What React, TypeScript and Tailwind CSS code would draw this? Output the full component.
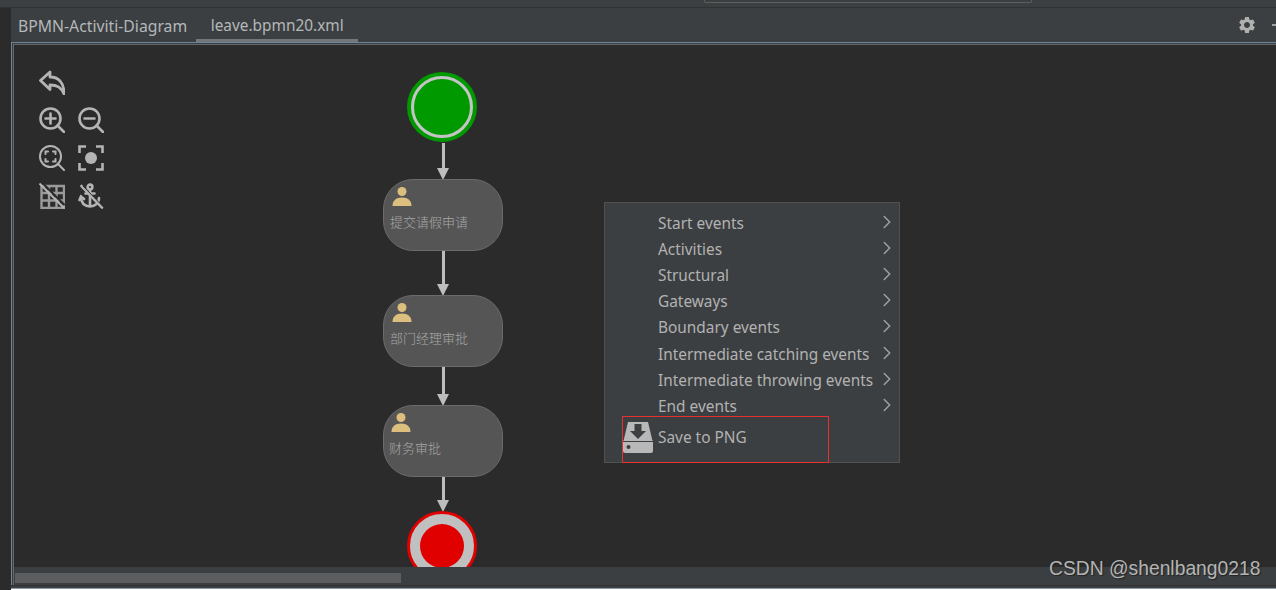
import React from 'react';
import { ChevronRight } from 'lucide-react';
import { MdSettings } from 'react-icons/md';

const MENU_ITEMS = [
  'Start events',
  'Activities',
  'Structural',
  'Gateways',
  'Boundary events',
  'Intermediate catching events',
  'Intermediate throwing events',
  'End events',
];

const TASKS = [
  { label: '提交请假申请', top: 'top-[134px]', text: 'pl-[6px]' },
  { label: '部门经理审批', top: 'top-[250px]', text: 'pl-[6px]' },
  { label: '财务审批', top: 'top-[360px]', text: 'pl-[5px]' },
];

const ARROWS = [
  { top: 'top-[98px]', h: 'h-[37px]' },
  { top: 'top-[206px]', h: 'h-[45px]' },
  { top: 'top-[322px]', h: 'h-[39px]' },
  { top: 'top-[432px]', h: 'h-[35px]' },
];

const iconClass = 'w-[26px] h-[26px] text-[#b4b4b4]';

const Toolbar = () => (
  <div className="absolute left-[25px] top-[24px] grid grid-cols-[26px_26px] gap-x-[13px] gap-y-[12px]">
    <svg viewBox="0 0 26 26" className={iconClass} fill="none" stroke="currentColor" strokeWidth="2.8" strokeLinejoin="round">
      <path d="M1.5 11.5 L11 3 V8 C19 8 25 13 25 25 C22 18 18 16 11 16 V20.5 Z" />
    </svg>
    <div />
    <svg viewBox="0 0 26 26" className={iconClass} fill="none" stroke="currentColor" strokeWidth="2.6" strokeLinecap="round">
      <circle cx="11.5" cy="11.5" r="10" />
      <path d="M18.5 18.5 L25 25 M11.5 6.5 V16.5 M6.5 11.5 H16.5" />
    </svg>
    <svg viewBox="0 0 26 26" className={iconClass} fill="none" stroke="currentColor" strokeWidth="2.6" strokeLinecap="round">
      <circle cx="11.5" cy="11.5" r="10" />
      <path d="M18.5 18.5 L25 25 M6.5 11.5 H16.5" />
    </svg>
    <svg viewBox="0 0 26 26" className={iconClass} fill="none" stroke="currentColor" strokeWidth="2" strokeLinecap="round">
      <circle cx="11.5" cy="11.5" r="10.5" />
      <path d="M18.8 18.8 L25 25 M6.5 9 V6.5 H9 M14 6.5 H16.5 V9 M16.5 14 V16.5 H14 M9 16.5 H6.5 V14" />
    </svg>
    <svg viewBox="0 0 26 26" className={iconClass} fill="none" stroke="currentColor" strokeWidth="2.6">
      <path d="M1.5 8 V1.5 H8 M18 1.5 H24.5 V8 M24.5 18 V24.5 H18 M8 24.5 H1.5 V18" />
      <circle cx="13" cy="13" r="6" fill="currentColor" stroke="none" />
    </svg>
    <svg viewBox="0 0 26 26" className={iconClass} fill="none" stroke="#9a9a9a" strokeWidth="2.4">
      <path d="M2.5 3 H25 V25 H2.5 Z M2.5 10 H25 M2.5 17.5 H25 M10 3 V25 M17.5 3 V25" />
      <path d="M0.5 0.5 L25.5 25.5" stroke="#b4b4b4" strokeWidth="2" />
      <path d="M4 0.5 L25.5 22" stroke="#2b2b2b" strokeWidth="2" />
    </svg>
    <svg viewBox="0 0 26 26" className={iconClass} fill="none" stroke="currentColor" strokeWidth="2.6" strokeLinecap="round">
      <circle cx="12" cy="4" r="2.4" />
      <path d="M12 7 V23 M7.5 10.5 H16.5 M3 14 C3 20 7 23 12 23.5 C17 23 21 20 21 15" />
      <path d="M1.5 17 L3 13.5 L6 16 M3.5 3 L24 24.5" />
      <path d="M5 3 L25.5 24" stroke="#2b2b2b" strokeWidth="1" />
    </svg>
  </div>
);

const UserIcon = () => (
  <svg viewBox="0 0 20 20" className="w-[20px] h-[20px]" fill="#dcbf7e">
    <circle cx="10" cy="5.5" r="4.5" />
    <path d="M0.5 20 C0.5 14.5 4 11.5 10 11.5 C16 11.5 19.5 14.5 19.5 20 Z" />
  </svg>
);

const Task = ({ label, top, text }: { label: string; top: string; text: string }) => (
  <div className={`absolute left-[369px] ${top} w-[120px] h-[72px] rounded-[30px] bg-[#555555] border border-[#6b6b6b] ${text}`}>
    <div className="ml-[2px] mt-[6px]">
      <UserIcon />
    </div>
    <div className="mt-[6px] text-[13px] leading-[20px] text-[#a6a6a6] font-['Noto_Sans_CJK_SC',sans-serif] font-light">
      {label}
    </div>
  </div>
);

const Arrow = ({ top, h }: { top: string; h: string }) => (
  <div className={`absolute left-[423px] ${top} w-[12px] ${h} flex flex-col items-center`}>
    <div className="w-[3px] flex-1 bg-[#bdbdbd]" />
    <div className="w-0 h-0 border-x-[6px] border-x-transparent border-t-[12px] border-t-[#bdbdbd]" />
  </div>
);

const Menu = () => (
  <div className="absolute left-[590px] top-[157px] w-[296px] h-[261px] bg-[#3c3f41] border border-[#515151] pt-[7.5px] font-['Noto_Sans',sans-serif] text-[15.4px] text-[#b2b2b2]">
    {MENU_ITEMS.map((item) => (
      <div key={item} className="flex items-center h-[26.2px] pl-[53px] pr-[1px]">
        <span className="flex-1 leading-[26px] whitespace-nowrap">{item}</span>
        <ChevronRight className="w-[22px] h-[22px] text-[#a0a0a0] -mt-[4px]" strokeWidth={1.6} />
      </div>
    ))}
    <div className="absolute left-[17px] top-[213px] w-[207px] h-[47px] border border-[#e8302e] flex items-start">
      <svg viewBox="0 0 30 32" className="w-[30px] h-[32px] mt-[4px] shrink-0">
        <path d="M5 1 H25 L29.5 20 H0.5 Z" fill="#b8b8b8" />
        <path d="M11.5 3 H18.5 V10 H23 L15 18 L7 10 H11.5 Z" fill="#3c3f41" />
        <rect x="0" y="19" width="30" height="13" rx="2" fill="#b8b8b8" />
        <rect x="0" y="20" width="30" height="1" fill="#3c3f41" />
        <circle cx="5.5" cy="26" r="2" fill="#3c3f41" />
      </svg>
      <span className="ml-[5px] mt-[8px] leading-[26px]">Save to PNG</span>
    </div>
  </div>
);

const App: React.FC = () => {
  return (
    <div className="relative w-[1276px] h-[590px] flex flex-col overflow-hidden bg-[#3c3f41] font-['Noto_Sans',sans-serif]">
      {/* top strip */}
      <div className="h-[8px] shrink-0 border-b border-[#323232] flex">
        <div className="ml-[704px] w-[328px] h-[3px] border-x border-b border-[#5e6060] rounded-b-[2px]" />
      </div>

      <div className="flex-1 flex min-h-0">
        <div className="w-[11px] shrink-0 bg-[#2b2b2b]" />
        <div className="flex-1 flex flex-col min-w-0">
          {/* tab bar */}
          <div className="h-[34px] shrink-0 flex items-stretch text-[#b4b8bb]">
            <div className="pl-[7px] pr-[9px] leading-[36px] text-[15.75px] whitespace-nowrap">BPMN-Activiti-Diagram</div>
            <div className="w-[162px] text-center leading-[36px] text-[15.4px] border-b-[3px] border-[#73777b]">leave.bpmn20.xml</div>
            <div className="flex-1 flex justify-end items-center pr-[15px]">
              <MdSettings className="w-[20px] h-[20px] text-[#b0b0b0]" />
            </div>
            <div className="w-[4px] self-center h-[2px] bg-[#a0a0a0]" />
          </div>

          {/* editor */}
          <div className="flex-1 flex flex-col min-h-0 border-t border-l border-[#6f8494]">
            <div className="flex-1 flex flex-col min-h-0 mt-px ml-px border-t border-l border-[#5f686e]">
              <div className="relative flex-1 min-h-0 bg-[#2b2b2b] overflow-hidden">
                <Toolbar />

                <div className="absolute left-[393px] top-[27px] w-[70px] h-[70px] rounded-full bg-[#009900] border-[4px] border-[#009900]">
                  <div className="w-full h-full rounded-full border-[3px] border-[#c4c4c4]" />
                </div>
                {ARROWS.map((a) => (
                  <Arrow key={a.top} top={a.top} h={a.h} />
                ))}
                {TASKS.map((t) => (
                  <Task key={t.label} label={t.label} top={t.top} text={t.text} />
                ))}
                <div className="absolute left-[393px] top-[466px] w-[70px] h-[70px] rounded-full bg-[#c0c0c0] border-[3px] border-[#e00000] flex items-center justify-center">
                  <div className="w-[44px] h-[44px] rounded-full bg-[#e00000]" />
                </div>

                <Menu />
              </div>
              {/* horizontal scrollbar */}
              <div className="h-[18px] shrink-0 bg-[#3c3f41] pt-[6px] pl-px">
                <div className="w-[386px] h-[10px] bg-[#5b5d5e]" />
              </div>
            </div>
          </div>
          {/* bottom edge */}
          <div className="h-[3px] shrink-0 border-t border-[#2f3133]" />
          <div className="h-[2px] shrink-0 bg-white border-t border-[#8a9aa8]" />
        </div>
      </div>

      <div className="absolute left-[1049px] top-[557px] text-[19.3px] leading-[24px] text-[#b4b4b4] font-['Liberation_Sans',sans-serif] whitespace-nowrap [text-shadow:1px_1px_1px_#222]">
        CSDN @shenlbang0218
      </div>
    </div>
  );
};

export default App;
